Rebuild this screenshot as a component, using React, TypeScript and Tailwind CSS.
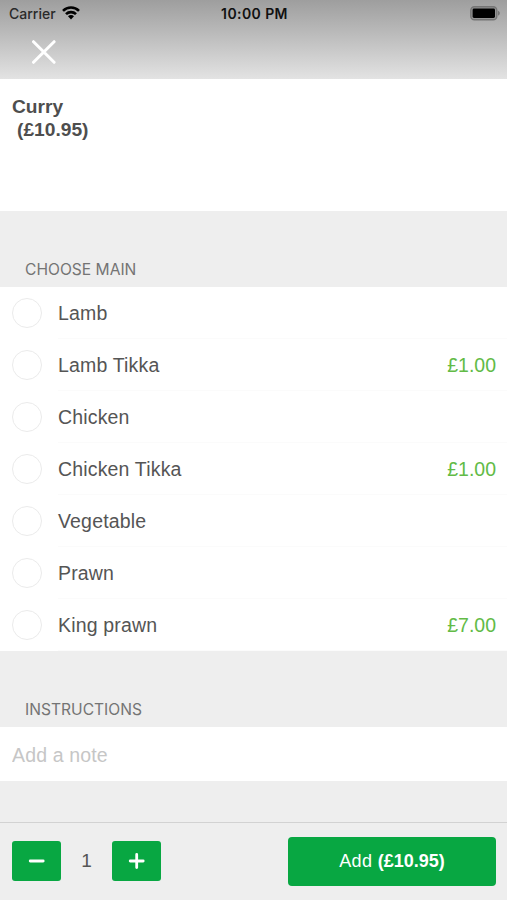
import React, { useState } from 'react';

interface Option {
  id: string;
  name: string;
  price?: number;
}

const BASE_PRICE = 10.95;

const mains: Option[] = [
  { id: 'lamb', name: 'Lamb' },
  { id: 'lamb-tikka', name: 'Lamb Tikka', price: 1 },
  { id: 'chicken', name: 'Chicken' },
  { id: 'chicken-tikka', name: 'Chicken Tikka', price: 1 },
  { id: 'vegetable', name: 'Vegetable' },
  { id: 'prawn', name: 'Prawn' },
  { id: 'king-prawn', name: 'King prawn', price: 7 },
];

const formatPrice = (value: number) => `£${value.toFixed(2)}`;

const StatusBar: React.FC = () => (
  <div className="h-7 grid grid-cols-3 items-center pl-[9px] pr-[7px] font-['Inter',sans-serif] text-black">
    <div className="flex items-center gap-[6px]">
      <span className="text-[14px] leading-7 font-medium text-[#2a2a2a]">Carrier</span>
      <svg className="-mt-[3px]" width="18" height="15" viewBox="0 0 18 15" fill="none" stroke="currentColor" strokeWidth="2.6">
        <path d="M1 5.800a11.300 11.300 0 0 1 16 0" />
        <path d="M4 9.200a7 7 0 0 1 10 0" />
        <path d="M9 14.500l-3-3.200a4.200 4.200 0 0 1 6 0z" fill="currentColor" stroke="none" />
      </svg>
    </div>
    <span className="text-center text-[14px] leading-7 font-semibold tracking-[0.4px] text-[#111]">10:00 PM</span>
    <svg className="justify-self-end -mt-[2px]" width="30" height="15" viewBox="0 0 30 15">
      <rect x="0.8" y="0.8" width="26" height="13" rx="3.6" fill="#949494" stroke="#757575" strokeWidth="1.4" />
      <rect x="2.6" y="2.6" width="22.4" height="9.4" rx="1.4" fill="#000" />
      <path d="M28 4.800c1.200.4 1.800 1.300 1.800 2.400S29.200 9.200 28 9.600z" fill="#757575" />
    </svg>
  </div>
);

const SectionHeader: React.FC<{ title: string }> = ({ title }) => (
  <h2 className="h-19 pl-[25px] pt-[47px] font-['Inter',sans-serif] text-[15.6px] leading-6 text-[#747474]">
    {title}
  </h2>
);

const App: React.FC = () => {
  const [selected, setSelected] = useState<string | null>(null);
  const [quantity, setQuantity] = useState(1);
  const [note, setNote] = useState('');

  const extra = mains.find((m) => m.id === selected)?.price ?? 0;
  const total = (BASE_PRICE + extra) * quantity;

  return (
    <div className="w-full h-[900px] flex flex-col overflow-hidden bg-[#eeeeee] font-['Liberation_Sans',sans-serif] text-[#555]">
      <header className="h-[79px] shrink-0 bg-linear-to-b from-[#9e9e9e] to-[#e3e3e3]">
        <StatusBar />
        <button aria-label="Close" className="block ml-8 mt-3 text-white">
          <svg width="24" height="24" viewBox="0 0 24 24" fill="none" stroke="currentColor" strokeWidth="3" strokeLinecap="round">
            <path d="M1.500 1.700l20.600 20.600M22.100 1.700l-20.600 20.600" />
          </svg>
        </button>
      </header>

      {/* Item */}
      <section className="h-[131.500px] shrink-0 bg-white px-3 pt-4">
        <h1 className="text-[19.2px] leading-[23.4px] font-bold text-[#4e4e4e]">
          Curry
          <span className="block pl-[5px]">({formatPrice(BASE_PRICE)})</span>
        </h1>
      </section>

      {/* Options */}
      <SectionHeader title="CHOOSE MAIN" />
      <ul className="shrink-0 bg-white">
        {mains.map((main) => (
          <li key={main.id} className="h-[52.1px] flex pl-3">
            <button onClick={() => setSelected(main.id)} className="flex flex-1 items-center gap-4 text-left">
              <span
                className={`size-[30px] shrink-0 rounded-full border-[1.5px] ${
                  selected === main.id ? 'border-[#08a742] bg-[#08a742]' : 'border-[#ebebeb]'
                }`}
              />
              <span className="h-full flex flex-1 items-center justify-between border-b border-[#fbfbfb] pr-[11px] pt-[3px] text-[19.5px]">
                <span className="tracking-[0.17px]">{main.name}</span>
                {main.price && <span className="text-[#62bb46]">{formatPrice(main.price)}</span>}
              </span>
            </button>
          </li>
        ))}
      </ul>

      {/* Note */}
      <SectionHeader title="INSTRUCTIONS" />
      <input
        type="text"
        value={note}
        onChange={(e) => setNote(e.target.value)}
        placeholder="Add a note"
        className="h-[54px] shrink-0 bg-white px-3 pt-[3px] text-[19.5px] tracking-[0.15px] outline-none placeholder:text-[#c6c6c6]"
      />

      {/* Footer */}
      <footer className="mt-auto h-[78px] shrink-0 flex items-center justify-between border-t-[1.5px] border-[#d2d2d2] pb-px pl-3 pr-[11px]">
        <div className="flex items-center">
          <button
            aria-label="Remove one"
            onClick={() => setQuantity(Math.max(1, quantity - 1))}
            className="w-[49px] h-10 flex items-center justify-center rounded-[3px] bg-[#08a742] text-white"
          >
            <svg width="18" height="18" viewBox="0 0 18 18" stroke="currentColor" strokeWidth="2.8" strokeLinecap="round">
              <path d="M2.200 9h13" />
            </svg>
          </button>
          <span className="w-[51px] text-center text-[19px]">{quantity}</span>
          <button
            aria-label="Add one"
            onClick={() => setQuantity(quantity + 1)}
            className="w-[49px] h-10 flex items-center justify-center rounded-[3px] bg-[#08a742] text-white"
          >
            <svg width="18" height="18" viewBox="0 0 18 18" stroke="currentColor" strokeWidth="2.8" strokeLinecap="round">
              <path d="M2.200 9h13M8.700 2.500v13" />
            </svg>
          </button>
        </div>
        <button className="w-52 h-[49px] rounded-[4px] bg-[#08a742] pt-px text-[18px] text-white">
          <span className="tracking-[0.4px]">Add </span>
          <span className="font-bold">({formatPrice(total)})</span>
        </button>
      </footer>
    </div>
  );
};

export default App;
